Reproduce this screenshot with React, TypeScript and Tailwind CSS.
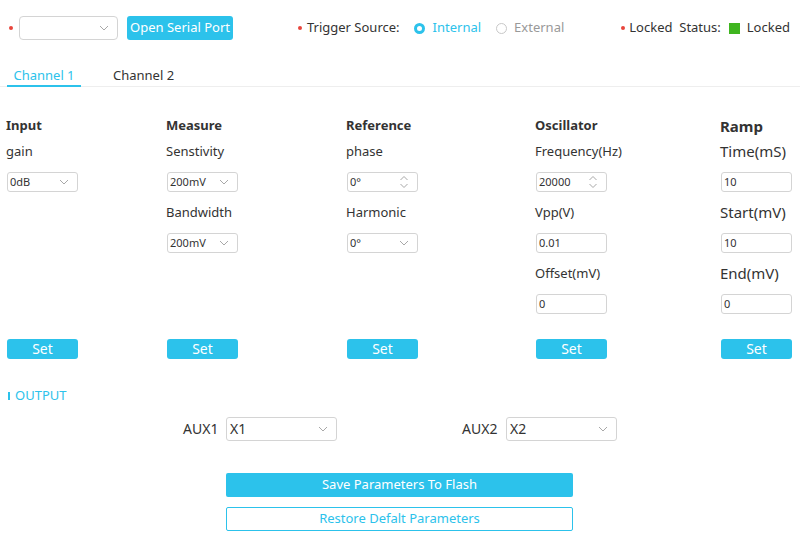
import React from "react";

const CYAN = "bg-[#2cc2eb]";

const Dot = () => <span className="shrink-0 w-[4px] h-[4px] rounded-full bg-[#e8453c]" />;

const Chevron = () => (
  <svg width="10" height="6" viewBox="0 0 10 6" className="text-[#a8a8a8] shrink-0">
    <path d="M1 1l4 4 4-4" fill="none" stroke="currentColor" strokeWidth="1" />
  </svg>
);

const Spinner = () => (
  <svg width="10" height="14" viewBox="0 0 10 14" className="text-[#a8a8a8] shrink-0">
    <path d="M1.5 5l3.5-3.5 3.5 3.5M1.5 9l3.5 3.5 3.5-3.5" fill="none" stroke="currentColor" strokeWidth="1" />
  </svg>
);

type Field = { label: string; value: string; kind: "select" | "spin" | "text" };

interface ColumnProps {
  title: string;
  fields: Field[];
  big?: boolean;
}

const Box = ({ f }: { f: Field }) => (
  <div className="w-[71px] h-[20px] border border-[#d4d4d4] rounded-[3px] flex items-center justify-between pl-[2px] pr-[8px] text-[11px] text-[#333]">
    <span>{f.value}</span>
    {f.kind === "select" && <Chevron />}
    {f.kind === "spin" && <Spinner />}
  </div>
);

const Column = ({ title, fields, big }: ColumnProps) => (
  <div className="flex flex-col">
    <div className={`h-[20px] flex items-center font-bold text-[#333] ${big ? "text-[15px]" : "text-[13px]"}`}>{title}</div>
    <div className="flex flex-col gap-[11px] mt-[6px]">
      {fields.map((f, i) => (
        <div key={i} className="flex flex-col gap-[10px]">
          <div className={`h-[20px] flex items-center text-[#333] ${big ? "text-[15px] -mt-[1px] mb-[1px]" : "text-[13px]"}`}>
            {f.label}
          </div>
          <div className="pl-[1px]">
            <Box f={f} />
          </div>
        </div>
      ))}
    </div>
  </div>
);

const cols: ColumnProps[] = [
  { title: "Input", fields: [{ label: "gain", value: "0dB", kind: "select" }] },
  {
    title: "Measure",
    fields: [
      { label: "Senstivity", value: "200mV", kind: "select" },
      { label: "Bandwidth", value: "200mV", kind: "select" },
    ],
  },
  {
    title: "Reference",
    fields: [
      { label: "phase", value: "0°", kind: "spin" },
      { label: "Harmonic", value: "0°", kind: "select" },
    ],
  },
  {
    title: "Oscillator",
    fields: [
      { label: "Frequency(Hz)", value: "20000", kind: "spin" },
      { label: "Vpp(V)", value: "0.01", kind: "text" },
      { label: "Offset(mV)", value: "0", kind: "text" },
    ],
  },
  {
    title: "Ramp",
    big: true,
    fields: [
      { label: "Time(mS)", value: "10", kind: "text" },
      { label: "Start(mV)", value: "10", kind: "text" },
      { label: "End(mV)", value: "0", kind: "text" },
    ],
  },
];

export default function App() {
  return (
    <div className="w-[800px] h-[553px] bg-white overflow-hidden font-['Noto_Sans',sans-serif] text-[#333]">
      {/* top bar */}
      <div className="flex items-center h-[24px] mt-[16px] text-[13px] whitespace-nowrap">
        <span className="ml-[9px] flex"><Dot /></span>
        <div className="ml-[6px] shrink-0 w-[99px] h-[24px] border border-[#d4d4d4] rounded-[4px] flex items-center justify-end pr-[8px]">
          <Chevron />
        </div>
        <button className={`ml-[9px] shrink-0 w-[106px] h-[24px] ${CYAN} text-white rounded-[3px] text-[13px]`}>Open Serial Port</button>
        <span className="ml-[65px] flex"><Dot /></span>
        <span className="ml-[5px] shrink-0">Trigger Source:</span>
        <span className="ml-[14px] shrink-0 w-[11px] h-[11px] rounded-full border-[3px] border-[#2cc2eb]" />
        <span className="ml-[8px] shrink-0 text-[#2cc2eb]">Internal</span>
        <span className="ml-[15px] shrink-0 w-[11px] h-[11px] rounded-full border border-[#c8c8c8]" />
        <span className="ml-[7px] shrink-0 text-[#999]">External</span>
        <span className="ml-[57px] flex"><Dot /></span>
        <span className="ml-[4px] shrink-0">Locked&nbsp;&nbsp;Status:</span>
        <span className="ml-[8px] shrink-0 w-[11px] h-[11px] bg-[#3fb51f]" />
        <span className="ml-[7px] shrink-0">Locked</span>
      </div>

      {/* tabs */}
      <div className="mt-[22px] flex border-b border-[#eeeeee] text-[13px] h-[25px]">
        <div className="ml-[7px] w-[74px] pt-[4px] flex items-start justify-center border-b-2 border-[#2cc2eb] text-[#2cc2eb] -mb-px">
          Channel 1
        </div>
        <div className="ml-[32px] pt-[4px] text-[#333]">Channel 2</div>
      </div>

      {/* columns */}
      <div className="mt-[29px] grid grid-cols-[160px_180px_189px_185px_80px] pl-[6px]">
        {cols.map((c) => (
          <Column key={c.title} {...c} />
        ))}
      </div>
      <div className="mt-[25px] grid grid-cols-[160px_180px_189px_185px_80px] pl-[7px]">
        {cols.map((c) => (
          <button key={c.title} className={`w-[71px] h-[20px] ${CYAN} text-white rounded-[3px] text-[14px] leading-none`}>
            Set
          </button>
        ))}
      </div>

      {/* output */}
      <div className="mt-[27px] ml-[8px] flex items-center gap-[5px] text-[13px] text-[#2cc2eb]">
        <span className="w-[2px] h-[8px] bg-[#2cc2eb]" />
        <span>OUTPUT</span>
      </div>
      <div className="mt-[11px] flex items-center text-[14px]">
        <span className="ml-[183px] w-[43px]">AUX1</span>
        <div className="w-[111px] h-[24px] border border-[#d4d4d4] rounded-[3px] flex items-center justify-between pl-[3px] pr-[8px]">
          <span>X1</span>
          <Chevron />
        </div>
        <span className="ml-[125px] w-[44px]">AUX2</span>
        <div className="w-[111px] h-[24px] border border-[#d4d4d4] rounded-[3px] flex items-center justify-between pl-[3px] pr-[8px]">
          <span>X2</span>
          <Chevron />
        </div>
      </div>

      <div className="ml-[226px] mt-[32px] w-[347px] flex flex-col gap-[10px] text-[13px]">
        <button className={`h-[24px] ${CYAN} text-white rounded-[2px]`}>Save Parameters To Flash</button>
        <button className="h-[24px] border border-[#2cc2eb] text-[#2cc2eb] rounded-[2px] bg-white">
          Restore Defalt Parameters
        </button>
      </div>
    </div>
  );
}
